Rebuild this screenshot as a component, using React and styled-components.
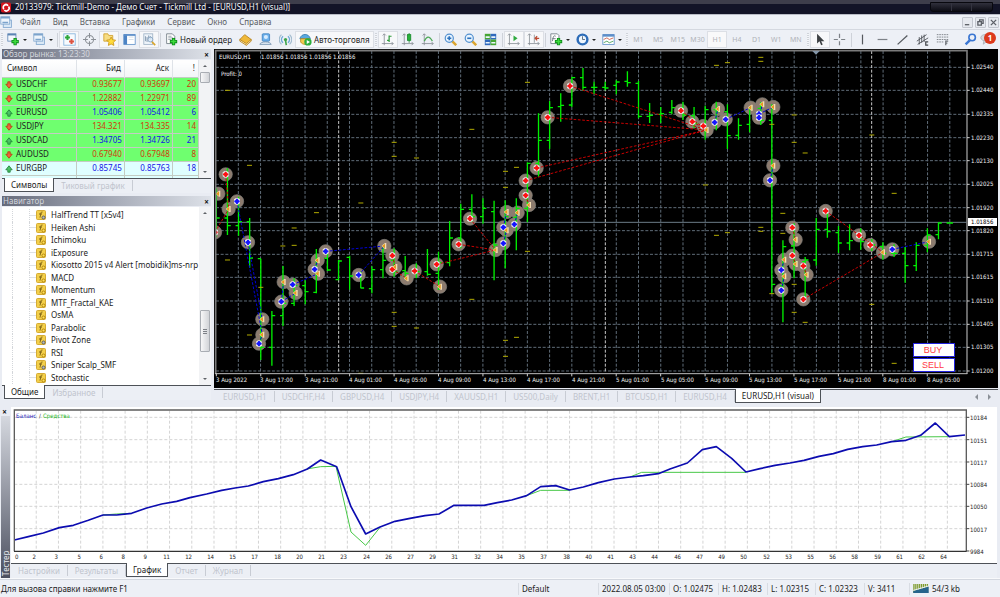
import { useState } from "react";
import styled, { createGlobalStyle } from "styled-components";

/* ================= Data ================= */

const menus = ["Файл", "Вид", "Вставка", "Графики", "Сервис", "Окно", "Справка"];

const timeframes = ["M1", "M5", "M15", "M30", "H1", "H4", "D1", "W1", "MN"];

const quotes = [
  { symbol: "USDCHF", bid: "0.93677", ask: "0.93697", spread: 20, down: true, hot: true },
  { symbol: "GBPUSD", bid: "1.22882", ask: "1.22971", spread: 89, down: true, hot: true },
  { symbol: "EURUSD", bid: "1.05406", ask: "1.05412", spread: 6, down: false, hot: true },
  { symbol: "USDJPY", bid: "134.321", ask: "134.335", spread: 14, down: true, hot: true },
  { symbol: "USDCAD", bid: "1.34705", ask: "1.34726", spread: 21, down: false, hot: true },
  { symbol: "AUDUSD", bid: "0.67940", ask: "0.67948", spread: 8, down: true, hot: true },
  { symbol: "EURGBP", bid: "0.85745", ask: "0.85763", spread: 18, down: false, hot: false },
  { symbol: "EURAUD", bid: "1.55116", ask: "1.55150", spread: 34, down: false, hot: false },
];

const indicators = [
  { name: "HalfTrend TT [x5v4]", custom: true },
  { name: "Heiken Ashi" },
  { name: "Ichimoku" },
  { name: "iExposure" },
  { name: "Kiosotto 2015 v4 Alert [mobidik]ms-nrp" },
  { name: "MACD" },
  { name: "Momentum" },
  { name: "MTF_Fractal_KAE" },
  { name: "OsMA" },
  { name: "Parabolic" },
  { name: "Pivot Zone", custom: true },
  { name: "RSI" },
  { name: "Sniper Scalp_SMF", custom: true },
  { name: "Stochastic" },
];

const chartTabs = [
  "EURUSD,H1",
  "USDCHF,H4",
  "GBPUSD,H4",
  "USDJPY,H4",
  "XAUUSD,H1",
  "US500,Daily",
  "BRENT,H1",
  "BTCUSD,H1",
  "EURUSD,H4",
  "EURUSD,H1 (visual)",
];

const testerTabs = ["Настройки", "Результаты", "График", "Отчет", "Журнал"];

const priceLevels = [
  [67, "1.02540"], [136, "1.02440"], [208, "1.02335"], [278, "1.02230"],
  [347, "1.02130"], [418, "1.02025"], [488, "1.01920"], [557, "1.01820"],
  [628, "1.01715"], [697, "1.01615"], [768, "1.01510"], [838, "1.01405"],
  [907, "1.01305"], [978, "1.01200"],
];

const timeLabels = [
  "3 Aug 2022", "3 Aug 17:00", "3 Aug 21:00", "4 Aug 01:00", "4 Aug 05:00",
  "4 Aug 09:00", "4 Aug 13:00", "4 Aug 17:00", "4 Aug 21:00", "5 Aug 01:00",
  "5 Aug 05:00", "5 Aug 09:00", "5 Aug 13:00", "5 Aug 17:00", "5 Aug 21:00",
  "8 Aug 01:00", "8 Aug 05:00",
];

// open, high, low, close
const bars = [
  [519, 430, 575, 519], [519, 370, 570, 542], [542, 455, 572, 530],
  [530, 519, 668, 639], [641, 641, 945, 907], [907, 798, 962, 812],
  [812, 663, 843, 775], [775, 700, 783, 722], [722, 706, 778, 740],
  [742, 612, 745, 640], [640, 620, 678, 675], [704, 645, 706, 648],
  [637, 632, 734, 693], [693, 680, 730, 729], [731, 664, 745, 674],
  [674, 600, 700, 646], [646, 610, 695, 680], [677, 633, 700, 685],
  [680, 655, 700, 680], [680, 612, 692, 688], [685, 620, 735, 653],
  [653, 528, 664, 579], [579, 476, 610, 493], [493, 448, 530, 515],
  [515, 460, 536, 490], [500, 467, 706, 600], [600, 466, 670, 515],
  [517, 460, 616, 490], [490, 352, 532, 355], [355, 205, 395, 286],
  [286, 168, 312, 188], [185, 145, 230, 181], [180, 95, 186, 98],
  [98, 69, 137, 127], [127, 110, 146, 127], [127, 110, 136, 129],
  [121, 106, 148, 111], [109, 79, 125, 113], [115, 108, 220, 214],
  [214, 174, 234, 211], [208, 186, 234, 206], [202, 165, 208, 188],
  [188, 170, 225, 210], [212, 186, 250, 235], [238, 182, 284, 194],
  [194, 170, 256, 200], [200, 178, 312, 272], [271, 220, 284, 241],
  [238, 185, 262, 190], [190, 172, 240, 226], [226, 178, 746, 718],
  [722, 586, 832, 605], [603, 535, 700, 650], [650, 636, 765, 645],
  [645, 519, 662, 553], [553, 495, 578, 560], [563, 543, 624, 594],
  [594, 538, 616, 587], [580, 550, 614, 590], [600, 582, 618, 600],
  [605, 592, 644, 625], [625, 598, 636, 625], [625, 606, 713, 662],
  [662, 592, 678, 601], [601, 550, 622, 570], [569, 532, 583, 534],
  [534, 532, 536, 534],
];

// sell entries, buy entries, closes
const trades = {
  sell: [
    [47, 388], [15, 562], [547, 632], [547, 673], [614, 678], [680, 658],
    [746, 598], [780, 521], [947, 451], [947, 407], [980, 369], [1013, 217],
    [1080, 123], [1413, 197], [1447, 230], [1480, 243], [1747, 548],
    [1747, 632], [1780, 663], [1780, 763], [1847, 498], [1947, 571], [1981, 600],
  ],
  buy: [
    [81, 469], [114, 592], [147, 896], [214, 770], [248, 719], [314, 673],
    [347, 619], [446, 690], [880, 547], [880, 595], [913, 538], [1514, 232],
    [1547, 223], [1647, 207], [1647, 218], [1680, 406], [1714, 675],
    [1714, 736], [2047, 613],
  ],
  close: [
    [25, 446], [56, 492], [157, 823], [157, 869], [221, 711], [257, 744],
    [323, 646], [324, 686], [523, 603], [556, 666], [590, 700], [690, 725],
    [857, 615], [890, 556], [890, 501], [923, 503], [957, 480], [1490, 255],
    [1524, 192], [1622, 188], [1657, 178], [1690, 186], [1690, 362],
    [1757, 584], [1757, 657], [1790, 689], [1723, 644], [1723, 694],
    [2019, 622], [2157, 590],
  ],
};

const sellLines = [
  [15, 562, 56, 492], [47, 388, 56, 492], [547, 632, 556, 666],
  [547, 673, 590, 700], [614, 678, 690, 725], [680, 658, 857, 615],
  [746, 598, 857, 615], [780, 521, 857, 615], [947, 451, 957, 480],
  [947, 407, 1490, 255], [980, 369, 1490, 255], [1013, 217, 1490, 255],
  [1080, 123, 1490, 255], [1413, 197, 1490, 255], [1447, 230, 1490, 255],
  [1747, 548, 1757, 584], [1747, 632, 1757, 657], [1780, 663, 1790, 689],
  [1780, 763, 2019, 622], [1847, 498, 2019, 622],
];

const buyLines = [
  [81, 469, 157, 869], [114, 592, 157, 823], [147, 896, 157, 869],
  [214, 770, 257, 744], [214, 770, 221, 711], [248, 719, 324, 686],
  [314, 673, 323, 646], [347, 619, 523, 603], [446, 690, 523, 603],
  [880, 547, 890, 501], [880, 595, 890, 556], [913, 538, 923, 503],
  [1514, 232, 1524, 192], [1547, 223, 1622, 188], [1647, 218, 1657, 178],
  [1647, 207, 1690, 186], [1680, 406, 1690, 362], [1714, 675, 1723, 644],
  [1714, 736, 1723, 694], [2047, 613, 2157, 590],
];

const levelTicks = [
  [52, 136], [118, 361], [52, 645], [118, 870], [152, 727], [218, 603],
  [252, 549], [252, 601], [319, 503], [452, 474], [452, 985], [552, 292],
  [552, 334], [619, 339], [552, 802], [552, 844], [619, 849], [785, 253],
  [785, 763], [886, 379], [886, 427], [919, 367], [952, 112], [952, 619],
  [886, 886], [886, 934], [919, 877], [1486, 420], [1519, 61], [1519, 571],
  [1552, 53], [1552, 563], [1652, 37], [1652, 49], [1652, 547], [1652, 559],
  [1685, 238], [1685, 746], [1718, 505], [1718, 565], [1752, 210],
  [1752, 292], [1785, 324], [1752, 718], [1752, 802], [1785, 832],
  [1985, 270], [1985, 778], [2052, 445], [2052, 955],
];

const tradeNumbers = [
  0, 2, 3, 5, 6, 8, 9, 11, 12, 14, 15, 17, 18, 20, 21, 23, 24, 26, 27, 29, 31,
  32, 34, 35, 37, 38, 40, 41, 43, 44, 46, 47, 49, 50, 52, 53, 55, 56, 58, 59,
  61, 62, 64,
];

const balanceLevels = [
  [52, "10184"], [119, "10151"], [186, "10117"], [253, "10084"],
  [319, "10050"], [386, "10017"], [453, "9984"],
];

const balancePoints =
  "43,420 85,410 130,399 178,383 220,376 265,361 309,345 350,345 395,340 440,324 " +
  "485,312 530,304 570,293 620,282 665,271 705,264 745,258 790,245 835,236 880,224 " +
  "922,207 962,180 1010,200 1053,320 1097,402 1140,381 1185,364 1230,355 1275,347 " +
  "1317,342 1362,316 1405,316 1452,316 1492,308 1535,300 1580,287 1622,260 1667,257 " +
  "1709,270 1750,261 1795,248 1843,237 1890,231 1930,227 1975,221 2010,207 2062,189 " +
  "2107,149 2149,140 2195,175 2238,216 2280,206 2325,196 2370,189 2412,181 2457,169 " +
  "2500,161 2543,148 2588,140 2630,135 2675,125 2718,121 2762,106 2806,69 2848,110 2895,105";

const equityPoints = [
  "309,345 350,342 395,340",
  "920,207 962,200 1008,199 1053,396 1097,436 1140,382",
  "1580,287 1622,271 1709,271",
  "1890,231 1925,217 2238,217",
  "2675,125 2718,111 2848,110",
];

/* ================= Icons ================= */

const glyphs = {
  newChart: (
    <>
      <rect x="1" y="1" width="10" height="9" fill="#f4f8fc" stroke="#5b84b4" />
      <path d="M1 2h10" stroke="#5b84b4" strokeWidth="2" />
      <path d="M10 6v9M5.500 10.500h9" stroke="#0b8a1a" strokeWidth="4" />
      <path d="M10 7v7M6.500 10.500h7" stroke="#3ddb3d" strokeWidth="2" />
    </>
  ),
  profiles: (
    <>
      <rect x="4" y="5" width="10" height="9" fill="#dbe9f6" stroke="#7ba3cc" />
      <rect x="1" y="1" width="11" height="9" fill="#eef5fc" stroke="#7ba3cc" />
      <path d="M1 2h11M3 8h7" stroke="#7ba3cc" strokeWidth="2" />
    </>
  ),
  market: (
    <>
      <rect x="1" y="1" width="14" height="14" fill="#f7fafd" stroke="#7fb0dc" />
      <path d="M5.500 2.500v6M2.500 5.500h6" stroke="#2ba63a" strokeWidth="2.500" />
      <path d="M10.500 7.500v6M7.500 10.500h6" stroke="#dd5340" strokeWidth="2.500" />
    </>
  ),
  target: (
    <g fill="none" stroke="#8b9097" strokeWidth="1.300">
      <circle cx="8" cy="8" r="5" />
      <path d="M8 0v6M8 10v6M0 8h6M10 8h6" />
    </g>
  ),
  folderStar: (
    <>
      <path d="M1 1h5l1 2h5v7H1z" fill="#f7dd84" stroke="#cf9d25" />
      <path
        d="M10 5l1.700 3.300 3.800.500-2.700 2.700.600 3.800L10 13.500l-3.400 1.800.600-3.800L4.500 8.800l3.800-.500z"
        fill="#ffdc3c"
        stroke="#c9921a"
      />
    </>
  ),
  dataWindow: (
    <>
      <rect x="1" y="2" width="14" height="12" fill="#fff" stroke="#5d8fc9" />
      <rect x="1" y="2" width="4" height="12" fill="#4c83c4" />
      <path d="M7 5h6M7 8h6" stroke="#cdd9e6" />
      <path d="M1 2.500h14" stroke="#5d8fc9" strokeWidth="2" />
    </>
  ),
  tester: (
    <>
      <rect x="1" y="1" width="11" height="13" fill="#eef4fa" stroke="#9db0c5" />
      <path d="M3 10V4M5 11V5M7 9V3M9 8V4" stroke="#7189a3" />
      <circle cx="9" cy="8" r="3" fill="#dceaf7" fillOpacity=".8" stroke="#7d9cbb" />
      <path d="M11 11l4 4" stroke="#d8a52c" strokeWidth="2" />
    </>
  ),
  order: (
    <>
      <path d="M2 1h7l3 3v9H2z" fill="#fff" stroke="#6b7680" />
      <path d="M4 4h4M4 6h6M4 8h4" stroke="#8d98a3" />
      <path d="M10.500 6v9M6 10.500h9" stroke="#0b8a1a" strokeWidth="4" />
      <path d="M10.500 7v7M7 10.500h7" stroke="#3ddb3d" strokeWidth="2" />
    </>
  ),
  book: (
    <>
      <path d="M1 8l6-6 8 6-6 7z" fill="#efb93a" stroke="#b47c12" />
      <path d="M1 8l8 5 6-5v2l-6 5-8-5z" fill="#fff0be" stroke="#b47c12" />
    </>
  ),
  community: (
    <>
      <rect x="4" y="1" width="9" height="9" rx="1" fill="#6fb2ec" stroke="#3a7fc0" />
      <circle cx="8.500" cy="5" r="2.500" fill="#d7ecff" />
      <path d="M1 14c1-4 13-4 14 0z" fill="#e4edf6" stroke="#6f8dab" />
    </>
  ),
  signals: (
    <g fill="none">
      <circle cx="8" cy="8" r="2" fill="#3fa54b" />
      <path d="M5 4a5 5 0 000 8M11 4a5 5 0 010 8" stroke="#6aa9d8" strokeWidth="1.500" />
      <path d="M3 2a8 8 0 000 12M13 2a8 8 0 010 12" stroke="#a3bccf" strokeWidth="1.500" />
      <path d="M8 9l1 6" stroke="#3fa54b" strokeWidth="2" />
    </g>
  ),
  auto: (
    <>
      <path d="M1 7c2-7 11-7 13 0z" fill="#58a9df" stroke="#2f77ad" />
      <path d="M2 7h11v4c-2 4-9 4-11 0z" fill="#f2c94e" stroke="#b78a1d" />
      <circle cx="11" cy="11" r="4.500" fill="#2eae3d" />
      <path d="M9.500 8.500l4 2.500-4 2.500z" fill="#fff" />
    </>
  ),
  barChart: (
    <g fill="none">
      <path d="M4 1v14M1 13h14M2 3l2-2 2 2M13 11l2 2-2 2" stroke="#868d94" />
      <path d="M10 3v8M7.500 9H10M10 4h3" stroke="#2f9b3b" strokeWidth="1.500" />
    </g>
  ),
  candles: (
    <g fill="none">
      <path d="M4 1v14M1 13h14M2 3l2-2 2 2M13 11l2 2-2 2" stroke="#868d94" />
      <path d="M10 0v12" stroke="#16892a" />
      <rect x="8" y="2" width="4" height="7" fill="#27b33b" stroke="#16892a" />
    </g>
  ),
  lineChart: (
    <g fill="none">
      <path d="M4 1v14M1 13h14M2 3l2-2 2 2M13 11l2 2-2 2" stroke="#868d94" />
      <path d="M4 10c3-6 6-7 10 0" stroke="#4da957" strokeWidth="1.500" />
    </g>
  ),
  zoomIn: (
    <>
      <path d="M10 10l5 5" stroke="#d9a42f" strokeWidth="3" />
      <circle cx="6.500" cy="6.500" r="5" fill="#e8f4ff" stroke="#5390cf" strokeWidth="1.500" />
      <path d="M6.500 4v5M4 6.500h5" stroke="#2c72bd" strokeWidth="2" />
    </>
  ),
  zoomOut: (
    <>
      <path d="M10 10l5 5" stroke="#d9a42f" strokeWidth="3" />
      <circle cx="6.500" cy="6.500" r="5" fill="#e8f4ff" stroke="#5390cf" strokeWidth="1.500" />
      <path d="M4 6.500h5" stroke="#2c72bd" strokeWidth="2" />
    </>
  ),
  tile: (
    <>
      <rect x="1" y="1" width="7" height="7" fill="#45a534" />
      <rect x="8" y="1" width="7" height="7" fill="#2f68bd" />
      <rect x="1" y="8" width="7" height="7" fill="#2f68bd" />
      <rect x="8" y="8" width="7" height="7" fill="#45a534" />
      <path d="M2 5h5M9 5h5M2 12h5M9 12h5" stroke="#e9f3fb" strokeWidth="2" />
    </>
  ),
  scroll: (
    <>
      <path d="M3 1v14M1 13h14M1 3l2-2 2 2M13 11l2 2-2 2" stroke="#868d94" fill="none" />
      <path d="M8 3v7l5-3.500z" fill="#2faa3f" />
    </>
  ),
  shift: (
    <>
      <path d="M3 1v14M1 13h14M1 3l2-2 2 2M13 11l2 2-2 2M9 2v10" stroke="#868d94" fill="none" />
      <path d="M15 6.500h-5M12.500 4L10 6.500 12.500 9" stroke="#bd4b32" strokeWidth="1.500" fill="none" />
    </>
  ),
  indicators: (
    <>
      <path d="M1 1h8l2 2v10H1z" fill="#fff" stroke="#6b7680" />
      <path d="M3 10c1-7 2-7 4-6M3 7h4" stroke="#59646e" fill="none" />
      <path d="M10.500 6v9M6 10.500h9" stroke="#0b8a1a" strokeWidth="4" />
      <path d="M10.500 7v7M7 10.500h7" stroke="#3ddb3d" strokeWidth="2" />
    </>
  ),
  clock: (
    <>
      <circle cx="8" cy="8" r="6" fill="#eef6fd" stroke="#2d6cb8" strokeWidth="3" />
      <path d="M8 4v4h3" stroke="#45586b" fill="none" />
    </>
  ),
  template: (
    <>
      <rect x="1" y="2" width="14" height="12" fill="#fff" stroke="#5d8fc9" />
      <path d="M1 3h14" stroke="#5d8fc9" strokeWidth="3" />
      <path d="M2 8l4-2 3 2 5-2" stroke="#c44d3a" fill="none" />
      <path d="M2 12l4-2 3 2 5-2" stroke="#3f9d4c" fill="none" />
    </>
  ),
  cursor: <path d="M5 1v12l3-3 2 5 2-1-2-4h4z" fill="#3c4043" />,
  cross: <path d="M8 1v5M8 10v5M1 8h5M10 8h5" stroke="#7d8288" strokeWidth="1.500" />,
  vline: <path d="M8 2v12" stroke="#54595e" strokeWidth="1.500" />,
  hline: <path d="M2 8h12" stroke="#7d8288" strokeWidth="1.500" />,
  trend: <path d="M2 14L14 3" stroke="#54595e" strokeWidth="1.500" />,
  channel: (
    <g stroke="#44484d" fill="none">
      <path d="M1 10L13 2M2 14L15 6M4 5v9M7 3v9M10 2v9" />
      <path d="M15 11h-3v4h3" strokeWidth="1.500" />
    </g>
  ),
  fibo: (
    <g stroke="#6c7177" fill="none">
      <path d="M1 2h14M1 5h14M1 8h14M1 11h9" strokeDasharray="2 1" />
      <path d="M12 15v-5h3M12 12.500h2" strokeWidth="1.500" />
    </g>
  ),
  search: (
    <g fill="none" stroke="#3a76d2">
      <circle cx="10" cy="5.500" r="4" strokeWidth="2" />
      <path d="M7 9l-5 5" strokeWidth="3" />
    </g>
  ),
  mail: (
    <>
      <ellipse cx="7" cy="7" rx="6" ry="4" fill="#d5d9de" stroke="#a8adb3" />
      <path d="M5 10l-1 5 5-4z" fill="#d5d9de" stroke="#a8adb3" />
    </>
  ),
};

function Icon({ name }) {
  return (
    <IconSvg viewBox="0 0 16 16" aria-hidden="true">
      {glyphs[name]}
    </IconSvg>
  );
}

function TickmillLogo() {
  return (
    <LogoSvg viewBox="0 0 12 12" aria-hidden="true">
      <rect width="12" height="12" rx="2" fill="#d3141c" />
      <path d="M8.500 3.800A3.300 3.300 0 103.400 8" fill="none" stroke="#fff" strokeWidth="2" />
      <path d="M4 9a3.300 3.300 0 005-4.300" fill="none" stroke="#fff" strokeWidth="2" />
    </LogoSvg>
  );
}

function QuoteArrow({ down }) {
  const color = down ? "#f0683c" : "#4cc468";
  const edge = down ? "#b8320f" : "#1c7c32";
  return (
    <ArrowSvg viewBox="0 0 10 10" aria-hidden="true">
      <path
        d={down ? "M3.500 1h3v3H9L5 9 1 4h2.500z" : "M3.500 9h3V6H9L5 1 1 6h2.500z"}
        fill={color}
        stroke={edge}
      />
    </ArrowSvg>
  );
}

function IndicatorIcon({ custom }) {
  return (
    <FnSvg viewBox="0 0 20 20" aria-hidden="true">
      <rect x="1" y="1" width="18" height="18" rx="2" fill="#f3cf4a" stroke="#d5ab34" strokeWidth="2" />
      <path d="M13 4c-4-1-3 4-5 11M6 8h6" fill="none" stroke="#7a6015" strokeWidth="2" />
      <circle cx="15" cy="15" r="3" fill={custom ? "#b8bcc0" : "#ffe45a"} stroke={custom ? "#5d6063" : "#b38510"} strokeWidth="2" />
    </FnSvg>
  );
}

/* ================= Charts ================= */

const markers = Object.entries(trades).flatMap(([kind, points]) =>
  points.map(([x, y]) => ({ kind, x, y }))
);

function MarkerArrow({ kind, x, y }) {
  if (kind === "close") {
    return (
      <g transform={`translate(${x} ${y})`}>
        <path d="M6-9v18H2L-8 1v-2L2-9z" fill="#f3dcb4" />
        <path d="M2-7V7L-7 0z" fill="#e59a1c" />
      </g>
    );
  }
  return (
    <g transform={`translate(${x} ${y})`}>
      <path d="M-9-6l6-4h6l6 4v12l-6 4h-6l-6-4z" fill="#e9e6ea" />
      <path
        d="M-2-8h4l2 4 4 2v4l-4 2-2 4h-4l-2-4-4-2v-4l4-2z"
        fill={kind === "sell" ? "#ff1010" : "#1414ff"}
      />
    </g>
  );
}

function PriceChart() {
  const columns = Array.from({ length: 33 }, (_, i) => 85 + i * 66.7);

  return (
    <ChartSvg viewBox="0 0 784 339" role="img" aria-label="EURUSD,H1">
      <rect width="784" height="339" fill="#000" />
      <clipPath id="plot">
        <rect x="17" y="18" width="2254" height="970" />
      </clipPath>
      {/* plot data is kept in thirds of a pixel */}
      <g transform="translate(-4 -4) scale(0.33333)">
        <g stroke="#5f6c78" strokeWidth="3" strokeDasharray="9 5">
          {priceLevels.map(([y]) => (
            <line key={y} x1="18" x2="2271" y1={y} y2={y} />
          ))}
          {columns.map((x) => (
            <line key={x} x1={x} x2={x} y1="18" y2="984" />
          ))}
        </g>
        <g stroke="#c8c8c8" strokeWidth="3" strokeDasharray="9 5">
          <line x1="386" x2="386" y1="18" y2="984" />
          <line x1="1186" x2="1186" y1="18" y2="984" />
          <line x1="1985" x2="1985" y1="18" y2="984" />
        </g>
        <line x1="18" x2="2271" y1="532" y2="532" stroke="#6c7b88" strokeWidth="3" />

        <g clipPath="url(#plot)">
          {markers.map(({ kind, x, y }) => (
            <circle key={`${kind}${x}-${y}`} cx={x} cy={y} r="20" fill="#8c7b6e" stroke="#80807c" strokeWidth="2" />
          ))}
          <g stroke="#00f000" strokeWidth="4" fill="none">
            {bars.map(([open, high, low, close], i) => {
              const x = 19 + i * 33.33;
              return (
                <path key={i} d={`M${x} ${high}V${low}M${x - 9} ${open}H${x}M${x} ${close}h10`} />
              );
            })}
          </g>
          <g stroke="#c80000" strokeWidth="3" strokeDasharray="8 5">
            {sellLines.map(([x1, y1, x2, y2]) => (
              <line key={`${x1}-${y1}`} x1={x1} y1={y1} x2={x2} y2={y2} />
            ))}
          </g>
          <g stroke="#0000d8" strokeWidth="3" strokeDasharray="8 5">
            {buyLines.map(([x1, y1, x2, y2]) => (
              <line key={`${x1}-${y1}-${x2}`} x1={x1} y1={y1} x2={x2} y2={y2} />
            ))}
          </g>
          {markers.map(({ kind, x, y }) => (
            <MarkerArrow key={`${kind}${x}-${y}`} kind={kind} x={x} y={y} />
          ))}
          <g stroke="#b4ac00" strokeWidth="3">
            {levelTicks.map(([x, y]) => (
              <line key={`${x}-${y}`} x1={x - 7} x2={x + 8} y1={y} y2={y} />
            ))}
          </g>
        </g>

        <path d="M17 987V17H2271V987" fill="none" stroke="#7b7b7b" strokeWidth="5" />
        <path d="M15 986H2272" stroke="#bdbdbd" strokeWidth="3" />
        <path d="M1807 18h22l-11 11z" fill="#8496a8" />
        {timeLabels.map((label, i) => (
          <path key={label} d={`M${19 + i * 133.3} 986v8`} stroke="#d0d0d0" strokeWidth="3" />
        ))}
        {priceLevels.map(([y]) => (
          <path key={y} d={`M2271 ${y}h8`} stroke="#d0d0d0" strokeWidth="3" />
        ))}
      </g>

      <g fill="#f2f2f2">
        <ChartText x="5" y="10">EURUSD,H1</ChartText>
        <ChartText x="47" y="10">1.01856 1.01856 1.01856 1.01856</ChartText>
        <ChartText x="7" y="27">Profit: 0</ChartText>
        {priceLevels.map(([y, label]) => (
          <ChartText key={label} x="757" y={Math.round(y / 3 - 2)}>{label}</ChartText>
        ))}
        {timeLabels.map((label, i) => (
          <ChartText key={label} x={Math.round(2 + i * 44.45)} y="333">{label}</ChartText>
        ))}
      </g>
      <rect x="754" y="169" width="29" height="8" fill="#fff" />
      <ChartText x="757" y="175" fill="#000">1.01856</ChartText>
    </ChartSvg>
  );
}

function BalanceChart() {
  const columns = tradeNumbers.map((_, i) => 42 + i * 66.67);

  return (
    <ChartSvg viewBox="0 0 986 156" role="img" aria-label="Баланс / Средства">
      <g transform="translate(-11 -7) scale(0.33333)" fill="none">
        <g stroke="#d4d4d4" strokeWidth="3" strokeDasharray="9 6">
          {balanceLevels.slice(0, -1).map(([y]) => (
            <line key={y} x1="43" x2="2898" y1={y} y2={y} />
          ))}
          {columns.slice(1).map((x) => (
            <line key={x} x1={x} x2={x} y1="32" y2="453" />
          ))}
        </g>
        {equityPoints.map((points) => (
          <polyline key={points} points={points} stroke="#46c846" strokeWidth="3" />
        ))}
        <polyline points={balancePoints} stroke="#0c0cb0" strokeWidth="5" strokeLinejoin="round" />
        <path d="M43 454V30H2899V454" stroke="#5c5c5c" strokeWidth="4" />
        <path d="M42 454H2900" stroke="#333" strokeWidth="4" />
        {balanceLevels.map(([y]) => (
          <path key={y} d={`M2899 ${y}h9`} stroke="#444" strokeWidth="3" />
        ))}
      </g>
      <ChartText x="5" y="11" fill="#1414b4">Баланс</ChartText>
      <ChartText x="28" y="11" fill="#333">/</ChartText>
      <ChartText x="32" y="11" fill="#1eb41e">Средства</ChartText>
      <g fill="#222">
        {tradeNumbers.map((n, i) => (
          <ChartText
            key={n}
            x={i === 0 ? 4 : Math.round(columns[i] / 3 - 11)}
            y="152"
            textAnchor={i === 0 ? "start" : "end"}
          >
            {n}
          </ChartText>
        ))}
        {balanceLevels.map(([y, label]) => (
          <ChartText key={label} x="959" y={Math.round(y / 3 - 4)}>{label}</ChartText>
        ))}
      </g>
    </ChartSvg>
  );
}

/* ================= Panels ================= */

function ToolBar() {
  const [frame, setFrame] = useState("H1");
  const tool = (name, label, active) => (
    <ToolButton type="button" aria-label={label} $active={active}>
      <Icon name={name} />
    </ToolButton>
  );
  const menuTool = (name, label) => (
    <ToolButton type="button" aria-label={label} $wide>
      <Icon name={name} />
      <Caret />
    </ToolButton>
  );

  return (
    <ToolRow>
      <Grip />
      {menuTool("newChart", "Новый график")}
      {menuTool("profiles", "Профили")}
      <Divider />
      {tool("market", "Обзор рынка", true)}
      {tool("target", "Окно данных")}
      {tool("folderStar", "Навигатор", true)}
      {tool("dataWindow", "Терминал")}
      {tool("tester", "Тестер стратегий", true)}
      <Divider />
      <TextButton type="button">
        <Icon name="order" />
        Новый ордер
      </TextButton>
      {tool("book", "MetaEditor")}
      {tool("community", "Сообщество")}
      {tool("signals", "Сигналы")}
      <TextButton type="button" $active>
        <Icon name="auto" />
        Авто-торговля
      </TextButton>
      <Grip />
      {tool("barChart", "Бары", true)}
      {tool("candles", "Свечи")}
      {tool("lineChart", "Линия")}
      <Divider />
      {tool("zoomIn", "Увеличить")}
      {tool("zoomOut", "Уменьшить")}
      {tool("tile", "Упорядочить окна")}
      <Divider />
      {tool("scroll", "Автопрокрутка", true)}
      {tool("shift", "Сдвиг графика", true)}
      <Divider />
      {menuTool("indicators", "Индикаторы")}
      {menuTool("clock", "Периоды")}
      {menuTool("template", "Шаблоны")}
      <Grip />
      <Frames>
        {timeframes.map((tf) => (
          <FrameButton key={tf} type="button" $active={tf === frame} onClick={() => setFrame(tf)}>
            {tf}
          </FrameButton>
        ))}
      </Frames>
      <Grip />
      {tool("cursor", "Курсор", true)}
      {tool("cross", "Перекрестие")}
      <Divider />
      {tool("vline", "Вертикальная линия")}
      {tool("hline", "Горизонтальная линия")}
      {tool("trend", "Трендовая линия")}
      {tool("channel", "Канал")}
      {tool("fibo", "Фибоначчи")}
      <Spacer />
      {tool("search", "Поиск")}
      <AlertButton type="button" aria-label="Уведомления">
        <Icon name="mail" />
        <Badge>1</Badge>
      </AlertButton>
    </ToolRow>
  );
}

function MarketWatch() {
  return (
    <Panel>
      <PanelTitle>
        Обзор рынка: 13:23:30
        <CloseButton type="button" aria-label="Закрыть">×</CloseButton>
      </PanelTitle>
      <PanelBody $height={118}>
        <QuoteTable>
          <colgroup>
            <col width="74" />
            <col width="48" />
            <col width="48" />
            <col width="26" />
          </colgroup>
          <thead>
            <tr>
              <th>Символ</th>
              <th>Бид</th>
              <th>Аск</th>
              <th>!</th>
            </tr>
          </thead>
          <tbody>
            {quotes.map((q) => (
              <QuoteRow key={q.symbol} $down={q.down} $hot={q.hot}>
                <td>
                  <QuoteArrow down={q.down} />
                  {q.symbol}
                </td>
                <td>{q.bid}</td>
                <td>{q.ask}</td>
                <td>{q.spread}</td>
              </QuoteRow>
            ))}
          </tbody>
        </QuoteTable>
        <ScrollBar>
          <ScrollArrow $up />
          <Thumb $height={11} />
          <Spacer />
          <ScrollArrow />
        </ScrollBar>
      </PanelBody>
      <Tabs>
        <Tab type="button" $active>Символы</Tab>
        <Tab type="button">Тиковый график</Tab>
      </Tabs>
    </Panel>
  );
}

function Navigator() {
  return (
    <Panel>
      <PanelTitle>
        Навигатор
        <CloseButton type="button" aria-label="Закрыть">×</CloseButton>
      </PanelTitle>
      <PanelBody $height={178}>
        <Tree>
          {indicators.map((item) => (
            <TreeItem key={item.name}>
              <Branch />
              <IndicatorIcon custom={item.custom} />
              {item.name}
            </TreeItem>
          ))}
        </Tree>
        <ScrollBar>
          <ScrollArrow $up />
          <Spacer />
          <Thumb $height={42}>
            <ThumbGrip />
          </Thumb>
          <ThumbRest />
          <ScrollArrow />
        </ScrollBar>
      </PanelBody>
      <Tabs>
        <Tab type="button" $active>Общие</Tab>
        <Tab type="button">Избранное</Tab>
      </Tabs>
    </Panel>
  );
}

export default function App() {
  const [chartTab, setChartTab] = useState("EURUSD,H1 (visual)");
  const [testerTab, setTesterTab] = useState("График");

  return (
    <>
      <GlobalStyle />
      <Window>
        <TitleBar>
          <TickmillLogo />
          20133979: Tickmill-Demo - Демо Счет - Tickmill Ltd - [EURUSD,H1 (visual)]
          <WindowButtons>
            <button type="button" aria-label="Свернуть" />
            <button type="button" aria-label="Развернуть" />
            <button type="button" aria-label="Закрыть" />
          </WindowButtons>
        </TitleBar>

        <MenuBar>
          <Icon name="profiles" />
          {menus.map((m) => (
            <MenuButton key={m} type="button">{m}</MenuButton>
          ))}
          <Spacer />
          <MdiButton type="button" aria-label="Свернуть окно">
            <svg viewBox="0 0 8 8"><path d="M1 6.500h5" /></svg>
          </MdiButton>
          <MdiButton type="button" aria-label="Восстановить окно">
            <svg viewBox="0 0 8 8"><path d="M3 3V1h4v4H5M1 3h4v4H1z" /></svg>
          </MdiButton>
          <MdiButton type="button" aria-label="Закрыть окно">
            <svg viewBox="0 0 8 8"><path d="M1 1l6 6M7 1L1 7" /></svg>
          </MdiButton>
        </MenuBar>

        <ToolBar />

        <Workspace>
          <SideColumn>
            <MarketWatch />
            <Navigator />
          </SideColumn>
          <ChartColumn>
            <ChartBox>
              <PriceChart />
              <TradeButtons>
                <TradeButton type="button">BUY</TradeButton>
                <TradeButton type="button">SELL</TradeButton>
              </TradeButtons>
            </ChartBox>
            <Tabs $chart>
              {chartTabs.map((tab) => (
                <Tab key={tab} type="button" $active={tab === chartTab} onClick={() => setChartTab(tab)}>
                  {tab}
                </Tab>
              ))}
              <Spacer />
              <SideArrow $left />
              <SideArrow />
            </Tabs>
          </ChartColumn>
        </Workspace>

        <Tester>
          <TesterStrip>
            <CloseButton type="button" aria-label="Закрыть">×</CloseButton>
            <StripLabel>Тестер</StripLabel>
          </TesterStrip>
          <TesterMain>
            <BalanceChart />
            <Tabs $tester>
              {testerTabs.map((tab) => (
                <Tab key={tab} type="button" $active={tab === testerTab} onClick={() => setTesterTab(tab)}>
                  {tab}
                </Tab>
              ))}
            </Tabs>
          </TesterMain>
        </Tester>

        <StatusBar>
          <StatusCell $grow>Для вызова справки нажмите F1</StatusCell>
          <StatusCell $width={80}>Default</StatusCell>
          <StatusCell $width={71}>2022.08.05 03:00</StatusCell>
          <StatusCell $width={49}>O: 1.02475</StatusCell>
          <StatusCell $width={49}>H: 1.02483</StatusCell>
          <StatusCell $width={48}>L: 1.02315</StatusCell>
          <StatusCell $width={49}>C: 1.02323</StatusCell>
          <StatusCell $width={45}>V: 3411</StatusCell>
          <StatusCell $width={91}>
            <SignalSvg viewBox="0 0 48 28" aria-hidden="true">
              <path d="M2 0v28M8 0v28M14 0v28M20 0v28M26 0v28M32 0v28M38 0v28M44 0v28" stroke="#7d9a2a" strokeWidth="4" />
              <path d="M0 28V22L48 8v20z" fill="#27648c" />
              <path d="M0 20L48 6" stroke="#eef1f6" strokeWidth="3" />
            </SignalSvg>
            54/3 kb
          </StatusCell>
        </StatusBar>
      </Window>
    </>
  );
}

/* ================= Styles ================= */

const GlobalStyle = createGlobalStyle`
  * {
    box-sizing: border-box;
  }

  body {
    margin: 0;
    background: #e9ecf3;
    color: #1c1c1c;
    font-family: "Noto Sans", "Open Sans", sans-serif;
    font-size: 8px;
    line-height: 12px;
  }

  button {
    margin: 0;
    padding: 0;
    border: 0;
    background: none;
    color: inherit;
    font: inherit;
    white-space: nowrap;
  }
`;

const Window = styled.div`
  display: flex;
  flex-direction: column;
  min-height: 100vh;
`;

const IconSvg = styled.svg`
  flex: none;
  width: 13px;
  height: 13px;
`;

const LogoSvg = styled.svg`
  width: 10px;
  height: 11px;
  margin-right: 4px;
`;

const TitleBar = styled.header`
  display: flex;
  align-items: center;
  height: 15px;
  padding: 0 7px 0 1px;
  border-bottom: 1px solid #b9bcc6;
  background: linear-gradient(#3e3e4b 4px, #131427 4px);
  color: #f4f4f6;
`;

const WindowButtons = styled.div`
  display: flex;
  width: 63px;
  height: 10px;
  margin-left: auto;
  border: 1px solid #08080e;
  border-radius: 0 0 3px 3px;
  background: linear-gradient(#30303c, #0c0c14);

  button {
    flex: 1;
    border-right: 1px solid #343440;
  }

  button:last-child {
    border-right: 0;
  }
`;

const MenuBar = styled.nav`
  display: flex;
  align-items: center;
  gap: 2px;
  height: 15px;
  padding: 0 1px 0 0;
  border-bottom: 1px solid #d4d8e0;
  background: #eef1f7;
`;

const MenuButton = styled.button`
  padding: 0 5px;
  color: #5a5d63;
`;

const MdiButton = styled.button`
  display: flex;
  align-items: center;
  justify-content: center;
  width: 11px;
  height: 11px;
  border: 1px solid #c3c7cf;
  border-radius: 1px;
  background: #e6e9ef;

  svg {
    width: 7px;
    height: 7px;
    fill: none;
    stroke: #5b5f66;
    stroke-width: 1.5;
  }
`;

const ToolRow = styled.div`
  display: flex;
  align-items: center;
  height: 19px;
  background: #edf0f6;
`;

const ToolButton = styled.button`
  display: flex;
  flex: none;
  align-items: center;
  justify-content: center;
  gap: 3px;
  width: ${({ $wide }) => ($wide ? 26 : 20)}px;
  height: 17px;
  border: 1px solid ${({ $active }) => ($active ? "#dcdfe5" : "transparent")};
  background: ${({ $active }) => ($active ? "#f7f8fa" : "transparent")};
`;

const TextButton = styled(ToolButton)`
  gap: 2px;
  width: auto;
  padding: 0 ${({ $active }) => ($active ? 3 : 2)}px;
  color: #1c1c1c;
`;

const Caret = styled.span`
  border: 2px solid transparent;
  border-top-color: #222;
  border-bottom: 0;
`;

const Grip = styled.span`
  flex: none;
  width: 2px;
  height: 14px;
  margin: 0 1px;
  background: repeating-linear-gradient(#cfd3da 0 1px, #f4f6f9 1px 2px);
`;

const Divider = styled.span`
  flex: none;
  width: 1px;
  height: 14px;
  margin: 0 1px;
  background: #ced2d9;
`;

const Spacer = styled.span`
  flex: 1;
`;

const Frames = styled.div`
  display: flex;
  width: 177px;
`;

const FrameButton = styled.button`
  flex: 1;
  height: 17px;
  border: 1px solid ${({ $active }) => ($active ? "#dcdfe5" : "transparent")};
  background: ${({ $active }) => ($active ? "#f9f9fa" : "transparent")};
  color: #b0b3b8;
  font-size: 7px;
`;

const AlertButton = styled.button`
  position: relative;
  width: 20px;
  height: 17px;
  text-align: left;
`;

const Badge = styled.span`
  position: absolute;
  top: 1px;
  right: 4px;
  width: 12px;
  height: 12px;
  border-radius: 50%;
  background: #dc3a1c;
  color: #fff;
  font-weight: bold;
  text-align: center;
`;

const Workspace = styled.main`
  display: flex;
  height: 356px;
`;

const SideColumn = styled.aside`
  display: flex;
  flex: none;
  flex-direction: column;
  gap: 3px;
  width: 213px;
  padding: 0 2px;
`;

const Panel = styled.section`
  background: #eceff5;
`;

const PanelTitle = styled.h2`
  display: flex;
  align-items: center;
  justify-content: space-between;
  height: 11px;
  margin: 0;
  padding-left: 1px;
  border-bottom: 1px solid #e9ecf3;
  background: linear-gradient(90deg, #666b7b, #a3a8b5 50%, #dde1e8);
  color: #d3d6dd;
  font-size: 8px;
  font-weight: normal;
  line-height: 10px;
`;

const CloseButton = styled.button`
  width: 9px;
  color: #111;
  font-weight: bold;
  line-height: 9px;
`;

const PanelBody = styled.div`
  display: flex;
  height: ${({ $height }) => $height}px;
  overflow: hidden;
  background: #fff;
`;

const QuoteTable = styled.table`
  flex: 1;
  align-self: flex-start;
  table-layout: fixed;
  border-collapse: collapse;

  th {
    height: 17px;
    padding: 0 3px;
    border-right: 1px solid #dfe3e8;
    background: linear-gradient(#fff, #f3f5f8);
    font-weight: normal;
    text-align: right;
  }

  th:first-child {
    padding-left: 5px;
    text-align: left;
  }
`;

const QuoteRow = styled.tr`
  background: ${({ $hot }) => ($hot ? "#6fff6f" : "#dfffff")};

  td {
    height: 14px;
    padding: 0 2px;
    border: 1px solid #c3ccc3;
    border-left: 0;
    color: ${({ $down }) => ($down ? "#d2380c" : "#1414e6")};
    line-height: 12px;
    text-align: right;
  }

  td:first-child {
    padding-left: 3px;
    color: #222;
    text-align: left;
  }
`;

const ArrowSvg = styled.svg`
  width: 8px;
  height: 8px;
  margin-right: 3px;
  vertical-align: middle;
`;

const ScrollBar = styled.div`
  display: flex;
  flex: none;
  flex-direction: column;
  align-items: center;
  width: 12px;
  padding: 5px 0;
  background: #f2f3f5;
`;

const ScrollArrow = styled.span`
  border: 2px solid transparent;
  border-${({ $up }) => ($up ? "bottom" : "top")}-color: #5e6267;
  border-${({ $up }) => ($up ? "top" : "bottom")}: 0;
`;

const Thumb = styled.span`
  display: flex;
  align-items: center;
  justify-content: center;
  width: 10px;
  height: ${({ $height }) => $height}px;
  margin-top: 5px;
  border: 1px solid #a9adb3;
  border-radius: 1px;
  background: linear-gradient(90deg, #f7f7f8, #d2d4d8);
`;

const ThumbGrip = styled.span`
  width: 4px;
  height: 5px;
  background: repeating-linear-gradient(#7c8086 0 1px, transparent 1px 2px);
`;

const ThumbRest = styled.span`
  height: 26px;
`;

const Tabs = styled.div`
  display: flex;
  align-items: flex-start;
  height: 15px;
  padding: 0 2px;
  border-top: 1px solid #4d5157;
  ${({ $tester }) => $tester && "padding: 0;"}
  ${({ $chart }) => $chart && "margin-top: 1px;"}
`;

const Tab = styled.button`
  height: ${({ $active }) => ($active ? 14 : 11)}px;
  margin-top: ${({ $active }) => ($active ? -1 : 1)}px;
  padding: 0 ${({ $active }) => ($active ? 6 : 7)}px;
  border-style: solid;
  border-color: ${({ $active }) => ($active ? "#4d5157" : "#c8ccd4")};
  border-width: ${({ $active }) => ($active ? "0 1px 1px" : "0 1px 0 0")};
  background: ${({ $active }) => ($active ? "#fff" : "transparent")};
  color: ${({ $active }) => ($active ? "#222" : "#c0c4cd")};
  line-height: 12px;
`;

const SideArrow = styled.span`
  margin: 4px 5px 0;
  border: 3px solid transparent;
  border-${({ $left }) => ($left ? "right" : "left")}-color: #8b9097;
  border-${({ $left }) => ($left ? "left" : "right")}: 0;
`;

const Tree = styled.ul`
  display: flex;
  flex: 1;
  flex-direction: column;
  margin: 0;
  padding: 2px 0 1px 10px;
  list-style: none;
`;

const TreeItem = styled.li`
  display: flex;
  flex: 1;
  align-items: center;
  min-height: 0;
  border-left: 1px dotted #d3d6da;
  white-space: nowrap;
`;

const Branch = styled.span`
  align-self: stretch;
  width: 7px;
  margin-left: 16px;
  border-left: 1px dotted #d3d6da;
  background: linear-gradient(#dfe1e4, #dfe1e4) center / 100% 1px no-repeat;
`;

const FnSvg = styled.svg`
  flex: none;
  width: 10px;
  height: 10px;
  margin-right: 5px;
`;

const ChartColumn = styled.div`
  flex: 1;
  min-width: 0;
  padding: 0 2px 0 1px;
`;

const ChartBox = styled.div`
  position: relative;
`;

const ChartSvg = styled.svg`
  display: block;
  width: 100%;
  height: auto;
`;

const ChartText = styled.text`
  font-family: "DejaVu Sans Condensed", "Noto Sans", sans-serif;
  font-size: 6px;
  white-space: pre;
`;

const TradeButtons = styled.div`
  position: absolute;
  right: 43px;
  bottom: 16px;
  display: flex;
  flex-direction: column;
  gap: 1px;
`;

const TradeButton = styled.button`
  width: 42px;
  height: 14px;
  padding-right: 2px;
  border: 1px solid #2222dd;
  background: #fff;
  color: #ff3a44;
  font-family: "Liberation Sans", Arial, sans-serif;
  font-size: 9px;
`;

const Tester = styled.section`
  display: flex;
  margin-top: 2px;
  padding-right: 3px;
  border-bottom: 1px solid #f8f9fb;
`;

const TesterStrip = styled.div`
  display: flex;
  flex: none;
  flex-direction: column;
  width: 11px;
`;

/* rotated by half a turn, so the top padding ends up under the word */
const StripLabel = styled.span`
  flex: 1;
  width: 9px;
  margin: 0 1px;
  padding-top: 2px;
  background: linear-gradient(#4c5060, #d5d8df);
  color: #e6e8ed;
  line-height: 9px;
  transform: rotate(180deg);
  writing-mode: vertical-rl;
`;

const TesterMain = styled.div`
  flex: 1;
  min-width: 0;
  background: linear-gradient(#fff 157px, #eceff5 157px);
`;

const StatusBar = styled.footer`
  display: flex;
  flex: 1;
  align-items: center;
  min-height: 16px;
  border-top: 1px solid #d3d7df;
  background: #edf0f6;
`;

const StatusCell = styled.span`
  display: flex;
  flex: ${({ $grow }) => ($grow ? 1 : "none")};
  gap: 3px;
  align-items: center;
  width: ${({ $width }) => $width}px;
  padding-left: ${({ $grow }) => ($grow ? 1 : 3)}px;
  border-left: ${({ $grow }) => ($grow ? 0 : 1)}px solid #d8dce3;
  white-space: nowrap;
`;

const SignalSvg = styled.svg`
  width: 16px;
  height: 9px;
`;
